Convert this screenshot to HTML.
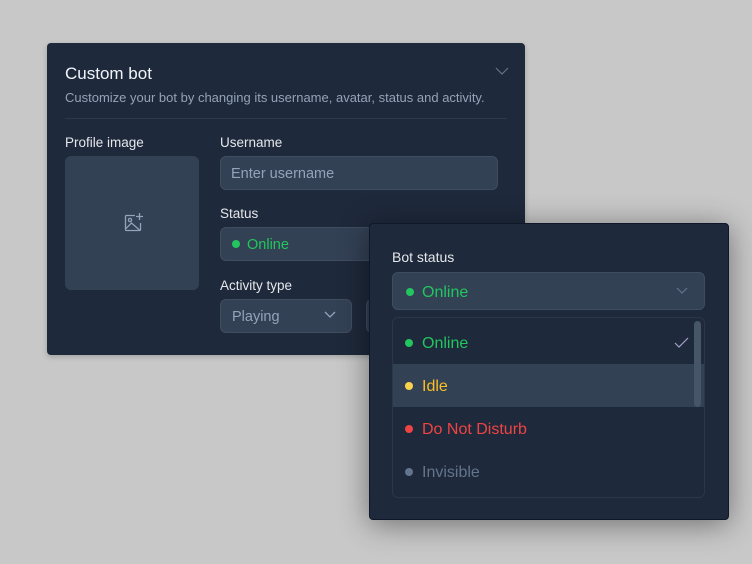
<!DOCTYPE html>
<html><head><style>
*{margin:0;padding:0;box-sizing:border-box}
body{width:752px;height:564px;background:#c8c8c8;font-family:"Liberation Sans",sans-serif;position:relative;overflow:hidden}
.a{position:absolute}
.card{background:#1e293b;border-radius:4px}
.in{background:#334155;border:1px solid #3f4d62;border-radius:6px}
.lbl{color:#e5e7eb;font-size:13.5px}
.dot{width:8px;height:8px;border-radius:50%;position:absolute}
</style></head><body>
<div class="a card" style="left:47px;top:43px;width:478px;height:312px;box-shadow:0 2px 6px rgba(0,0,0,.2)"></div>
<div class="a" style="left:65px;top:64px;color:#f1f5f9;font-size:17px">Custom bot</div>
<svg class="a" style="left:495px;top:66px" width="14" height="10"><path d="M1 2l6 6 6-6" fill="none" stroke="#64748b" stroke-width="1.2"/></svg>
<div class="a" style="left:65px;top:90px;color:#94a3b8;font-size:13px">Customize your bot by changing its username, avatar, status and activity.</div>
<div class="a" style="left:65px;top:118px;width:442px;height:1px;background:#2c3a4f"></div>
<div class="a lbl" style="left:65px;top:135px">Profile image</div>
<div class="a" style="left:65px;top:156px;width:134px;height:134px;background:#334155;border-radius:6px"></div>
<svg class="a" style="left:123px;top:212px" width="22" height="22" fill="none" stroke="#94a3b8" stroke-width="1.3"><path d="M12 3.5H3.5a1 1 0 0 0-1 1v13a1 1 0 0 0 1 1h13a1 1 0 0 0 1-1V11"/><circle cx="7" cy="8" r="1.6"/><path d="M3 16.5l5.5-5.5 8.5 7.5"/><path d="M16.5 1v7M13 4.5h7"/></svg>
<div class="a lbl" style="left:220px;top:135px">Username</div>
<div class="a in" style="left:220px;top:156px;width:278px;height:34px"></div>
<div class="a" style="left:231px;top:166px;color:#94a3b8;font-size:14.5px">Enter username</div>
<div class="a lbl" style="left:220px;top:206px">Status</div>
<div class="a in" style="left:220px;top:227px;width:200px;height:34px"></div>
<div class="dot" style="left:232px;top:240px;background:#22c55e"></div>
<div class="a" style="left:247px;top:237px;color:#22c55e;font-size:14.5px">Online</div>
<div class="a lbl" style="left:220px;top:278px">Activity type</div>
<div class="a in" style="left:220px;top:299px;width:132px;height:34px"></div>
<div class="a" style="left:232px;top:309px;color:#94a3b8;font-size:14.5px">Playing</div>
<svg class="a" style="left:324px;top:311px" width="12" height="8"><path d="M1 1l5 5 5-5" fill="none" stroke="#94a3b8" stroke-width="1.3"/></svg>
<div class="a in" style="left:366px;top:299px;width:20px;height:34px"></div>

<div class="a card" style="left:369px;top:223px;width:360px;height:297px;box-shadow:0 4px 30px rgba(0,0,0,.45);border:1px solid #0f172a"></div>
<div class="a lbl" style="left:392px;top:249px;font-size:14px">Bot status</div>
<div class="a in" style="left:392px;top:272px;width:313px;height:38px"></div>
<div class="dot" style="left:406px;top:288px;background:#22c55e"></div>
<div class="a" style="left:422px;top:284px;color:#22c55e;font-size:16px">Online</div>
<svg class="a" style="left:676px;top:287px" width="12" height="8"><path d="M1 1l5 5 5-5" fill="none" stroke="#64748b" stroke-width="1.2"/></svg>
<div class="a" style="left:392px;top:317px;width:313px;height:181px;border:1px solid #2a374b;border-radius:6px;background:#1e293b;overflow:hidden">
<div class="a" style="left:0;top:46px;width:313px;height:43px;background:#334155"></div>
</div>
<div class="a" style="left:694px;top:321px;width:7px;height:86px;background:#475569;border-radius:4px"></div>
<div class="dot" style="left:405px;top:339px;background:#22c55e"></div>
<div class="a" style="left:422px;top:335px;color:#22c55e;font-size:16px">Online</div>
<svg class="a" style="left:674px;top:337px" width="16" height="12"><path d="M1 6l4 4 9-9" fill="none" stroke="#a5a3c8" stroke-width="1.2"/></svg>
<div class="dot" style="left:405px;top:382px;background:#fcd34d"></div>
<div class="a" style="left:422px;top:378px;color:#fbbf24;font-size:16px">Idle</div>
<div class="dot" style="left:405px;top:425px;background:#ef4444"></div>
<div class="a" style="left:422px;top:421px;color:#ef4444;font-size:16px">Do Not Disturb</div>
<div class="dot" style="left:405px;top:468px;background:#64748b"></div>
<div class="a" style="left:422px;top:464px;color:#64748b;font-size:16px">Invisible</div>
</body></html>
